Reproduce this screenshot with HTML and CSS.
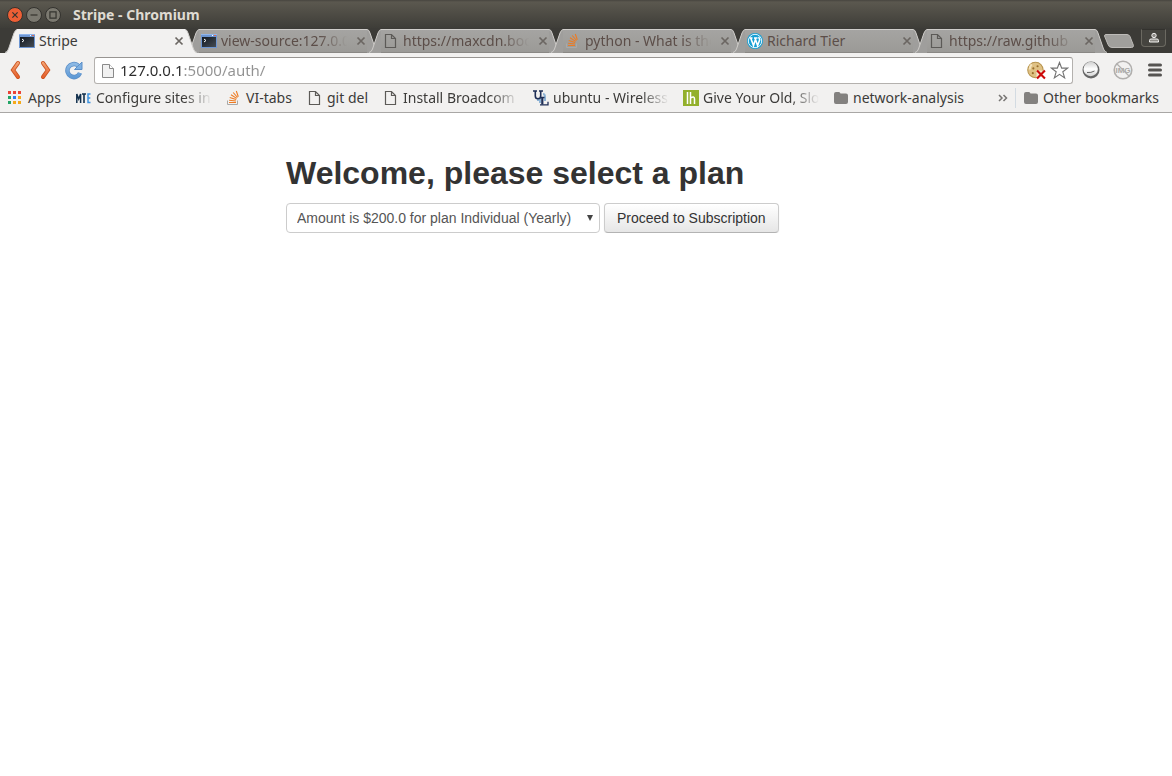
FILE: index.html
```html
<!DOCTYPE html>
<html lang="en">
<head>
<meta charset="utf-8">
<title>Stripe</title>
<link rel="stylesheet" href="styles.css">
</head>
<body>
<svg class="defs" aria-hidden="true">
  <defs>
    <linearGradient id="orange" x1="0" y1="0" x2="0" y2="1"><stop offset="0" stop-color="#f4a070"/><stop offset="1" stop-color="#e6602c"/></linearGradient>
    <linearGradient id="blue" x1="0" y1="0" x2="0" y2="1"><stop offset="0" stop-color="#8db9e4"/><stop offset="1" stop-color="#5f9ad6"/></linearGradient>
    <linearGradient id="ball" x1="0" y1="0" x2="0" y2="1"><stop offset="0" stop-color="#d0d0d0"/><stop offset=".5" stop-color="#ffffff"/><stop offset="1" stop-color="#d5d5d5"/></linearGradient>
    <linearGradient id="term" x1="0" y1="0" x2="1" y2="1"><stop offset="0" stop-color="#111820"/><stop offset="1" stop-color="#454c54"/></linearGradient>
  </defs>
  <symbol id="i-terminal" viewBox="0 0 16 16"><rect y="1" width="16" height="14" fill="#6d96d2"/><rect y="1" width="16" height="1" fill="#90b5ea"/><rect x="11" y="2" width="1" height="1" fill="#fff"/><rect x="13" y="2" width="2" height="1" fill="#e06a50"/><rect x="1" y="4" width="14" height="10" fill="url(#term)"/><path d="M3 6l2 1.500-2 1.500" fill="none" stroke="#fff"/></symbol>
  <symbol id="i-file" viewBox="0 0 16 16"><path d="M2.500 1.500h6l4 4v9h-10zM8.500 1.500v4h4" fill="none" stroke="#5c5a57" stroke-width="1.200"/></symbol>
  <symbol id="i-so" viewBox="0 0 16 16"><path d="M1.500 10.500v4h10v-4" fill="none" stroke="#aaa9a7"/><path d="M3 12.500h7M3.100 10.200l6.900.8M3.700 7.500l6.500 2M5 4.800l5.700 3.600M7.200 2.500l4.300 5M10.300 1l2 5.800" stroke="#ee7b22" stroke-width="1.100"/></symbol>
  <symbol id="i-wp" viewBox="0 0 16 16"><circle cx="8" cy="8" r="8" fill="#169fd4"/><circle cx="8" cy="8" r="6.700" fill="none" stroke="#fff" stroke-width=".9"/><path d="M2.500 5h3M7 5h3.500M3.700 5l2.800 7.500L8.300 7M8 5l2.600 7.500 2-5.500c.3-1.200-1-1.800-.6-3" fill="none" stroke="#fff" stroke-width="1.600"/></symbol>
  <symbol id="i-folder" viewBox="0 0 16 16"><path d="M1 4q0-2 2-2h3q1 0 1.500 1.500H13q2 0 2 2V12q0 2-2 2H3q-2 0-2-2z" fill="#83817f"/></symbol>
  <symbol id="i-close" viewBox="0 0 10 10"><path d="M1.500 1.500l7 7M8.500 1.500l-7 7" fill="none" stroke="currentColor" stroke-width="1.700"/></symbol>
  <symbol id="i-capl" viewBox="0 0 12 24"><path d="M0 24Q2.500 23 3.500 20L9 4Q10.500.5 12 .5V24z" fill="currentColor"/><path d="M0 23.500Q2.500 23 3.500 20L9 4Q10.500.5 12 .5" fill="none" stroke="#cfcdca"/></symbol>
  <symbol id="i-capr" viewBox="0 0 12 24"><path d="M0 .5Q2 .5 3 4L8.500 20Q9.500 23 12 24H0z" fill="currentColor"/><path d="M0 .5Q2 .5 3 4L8.500 20Q9.500 23 12 23.500" fill="none" stroke="#cfcdca"/></symbol>
</svg>

<header class="browser">
  <div class="titlebar">
    <button class="wm wm-close" aria-label="Close window"><svg viewBox="0 0 16 16"><path d="M5 5l6 6M11 5l-6 6"/></svg></button>
    <button class="wm" aria-label="Minimize"><svg viewBox="0 0 16 16"><path d="M4 8h8"/></svg></button>
    <button class="wm" aria-label="Maximize"><svg viewBox="0 0 16 16"><path d="M4.500 4.500h7v7h-7z"/></svg></button>
    <span class="window-title">Stripe - Chromium</span>
  </div>

  <div class="tabstrip">
    <div class="tabs">
      <div class="tab tab-active"><svg class="cap"><use href="#i-capl"/></svg><div class="tab-body"><svg class="icon"><use href="#i-terminal"/></svg><span class="tab-label">Stripe</span><button class="tab-close" aria-label="Close tab"><svg><use href="#i-close"/></svg></button></div><svg class="cap"><use href="#i-capr"/></svg></div>
      <div class="tab"><svg class="cap"><use href="#i-capl"/></svg><div class="tab-body"><svg class="icon"><use href="#i-terminal"/></svg><span class="tab-label fade">view-source:127.0.0.1</span><button class="tab-close" aria-label="Close tab"><svg><use href="#i-close"/></svg></button></div><svg class="cap"><use href="#i-capr"/></svg></div>
      <div class="tab"><svg class="cap"><use href="#i-capl"/></svg><div class="tab-body"><svg class="icon"><use href="#i-file"/></svg><span class="tab-label fade">https://maxcdn.bootstrap</span><button class="tab-close" aria-label="Close tab"><svg><use href="#i-close"/></svg></button></div><svg class="cap"><use href="#i-capr"/></svg></div>
      <div class="tab"><svg class="cap"><use href="#i-capl"/></svg><div class="tab-body"><svg class="icon"><use href="#i-so"/></svg><span class="tab-label fade">python - What is the</span><button class="tab-close" aria-label="Close tab"><svg><use href="#i-close"/></svg></button></div><svg class="cap"><use href="#i-capr"/></svg></div>
      <div class="tab"><svg class="cap"><use href="#i-capl"/></svg><div class="tab-body"><svg class="icon"><use href="#i-wp"/></svg><span class="tab-label">Richard Tier</span><button class="tab-close" aria-label="Close tab"><svg><use href="#i-close"/></svg></button></div><svg class="cap"><use href="#i-capr"/></svg></div>
      <div class="tab"><svg class="cap"><use href="#i-capl"/></svg><div class="tab-body"><svg class="icon"><use href="#i-file"/></svg><span class="tab-label fade">https://raw.github</span><button class="tab-close" aria-label="Close tab"><svg><use href="#i-close"/></svg></button></div><svg class="cap"><use href="#i-capr"/></svg></div>
    </div>
    <button class="new-tab" aria-label="New tab"><svg viewBox="0 0 32 16"><path d="M3 1.500h21q2 0 3 2L30.500 12.500q0 2-2 2H9q-3 0-4-3L1.500 3Q1.500 1.500 3 1.500z" fill="#a09f9c" stroke="#bdbbb8"/></svg></button>
    <button class="user" aria-label="User"><svg viewBox="0 0 12 12"><circle cx="6" cy="3.500" r="2.200"/><path d="M1.500 10V8.500q0-1.500 1.500-1.500h6q1.500 0 1.500 1.500V10z"/></svg></button>
  </div>

  <div class="toolbar">
    <button class="nav" aria-label="Back"><svg viewBox="0 0 20 20"><path d="M12 3L7 10l5 7" fill="none" stroke="#c9531f" stroke-width="4" stroke-linecap="round"/><path d="M12 3L7 10l5 7" fill="none" stroke="url(#orange)" stroke-width="2.300" stroke-linecap="round"/></svg></button>
    <button class="nav" aria-label="Forward"><svg viewBox="0 0 20 20"><path d="M8 3l5 7-5 7" fill="none" stroke="#c9531f" stroke-width="4" stroke-linecap="round"/><path d="M8 3l5 7-5 7" fill="none" stroke="url(#orange)" stroke-width="2.300" stroke-linecap="round"/></svg></button>
    <button class="nav" aria-label="Reload"><svg viewBox="0 0 20 20"><path d="M14 5.500A6.500 6.500 0 1 0 16 13" fill="none" stroke="#5c8fc8" stroke-width="4.500"/><path d="M10.500 9.500H18V2z" fill="#7db0e2" stroke="#5c8fc8"/><path d="M14 5.500A6.500 6.500 0 1 0 16 13" fill="none" stroke="url(#blue)" stroke-width="3"/></svg></button>
    <div class="omnibox">
      <svg class="icon" viewBox="0 0 16 16"><path d="M2.500 1.500h7l4 4v9h-11z" fill="#f1f1f1" stroke="#8a8a8a"/><path d="M9.500 1.500v4h4" fill="#fff" stroke="#8a8a8a"/></svg>
      <input class="url" type="text" value="127.0.0.1:5000/auth/" aria-label="Address" spellcheck="false">
      <button class="omni-btn" aria-label="Cookies blocked"><svg viewBox="0 0 18 18"><circle cx="8" cy="8.500" r="7.300" fill="#dfc184" stroke="#b8954f"/><path d="M4.500 3q-2 2-2 5" fill="none" stroke="#f5e4bd" stroke-width="2"/><circle cx="6" cy="7" r="1" fill="#986d2b"/><circle cx="10" cy="5" r="1" fill="#986d2b"/><circle cx="5.500" cy="11.500" r="1" fill="#986d2b"/><path d="M9 9h9v9H9z" fill="#fff" opacity=".6"/><path d="M9.500 9l7.500 7.500M17 9l-7.500 7.500" stroke="#cc0909" stroke-width="2"/></svg></button>
      <button class="omni-btn" aria-label="Bookmark this page"><svg viewBox="0 0 20 20"><path d="M10 1.500l2.300 6h6.200l-5 3.900 1.900 6.400L10 14.100l-5.400 3.700 1.900-6.400-5-3.900h6.200z" fill="#fff" stroke="#737373" stroke-width="1.200"/></svg></button>
    </div>
    <button class="ext" aria-label="Adblock"><svg viewBox="0 0 18 18"><circle cx="9" cy="9" r="8.500" fill="#666"/><circle cx="8.700" cy="8" r="7.200" fill="url(#ball)"/><path d="M5 11.500q4 .5 7.500-1.500" fill="none" stroke="#666"/></svg></button>
    <button class="ext ext-img" aria-label="Image blocker"><svg viewBox="0 0 20 20"><circle cx="10" cy="10" r="8.800" fill="none" stroke="#b1afad" stroke-width="1.600"/><text x="10" y="13" text-anchor="middle" class="img-text">IMG</text><path d="M4 4l12 12" stroke="#b1afad" stroke-width="1.300"/></svg></button>
    <button class="ext" aria-label="Menu"><svg viewBox="0 0 18 18"><path d="M3.500 4h11M3.500 9h11M3.500 14h11" stroke="#565452" stroke-width="3" stroke-linecap="round"/></svg></button>
  </div>

  <nav class="bookmarks">
    <a class="bm" href="#"><svg class="icon" viewBox="0 0 16 16"><path d="M0 1h3v3H0zM5 1h3v3H5zM10 1h3v3h-3z" fill="#ea4335"/><path d="M0 6h3v3H0zM0 11h3v3H0z" fill="#22a565"/><path d="M5 6h3v3H5z" fill="#2d7ff0"/><path d="M10 6h3v3h-3zM5 11h3v3H5zM10 11h3v3h-3z" fill="#f5a91a"/></svg><span class="bm-label w-xs">Apps</span></a>
    <a class="bm" href="#"><svg class="icon" viewBox="0 0 16 16"><path d="M.8 13V4l1.900 5 1.900-5v9" fill="none" stroke="#12304d" stroke-width="1.500"/><path d="M6 4h4M8 4v9" stroke="#12304d" stroke-width="1.600"/><path d="M14.500 4H12v8.500h2.500M12 8h2.300" fill="none" stroke="#3d92df" stroke-width="1.500"/></svg><span class="bm-label w-l fade">Configure sites in</span></a>
    <a class="bm" href="#"><svg class="icon"><use href="#i-so"/></svg><span class="bm-label w-m">VI-tabs</span></a>
    <a class="bm" href="#"><svg class="icon"><use href="#i-file"/></svg><span class="bm-label w-s">git del</span></a>
    <a class="bm" href="#"><svg class="icon"><use href="#i-file"/></svg><span class="bm-label w-l fade">Install Broadcom wireless</span></a>
    <a class="bm" href="#"><svg class="icon" viewBox="0 0 16 16"><path d="M4 10h4M10 4q2 0 2 3v4M6 12h2" fill="none" stroke="#8fb4d6" stroke-width="2"/><path d="M0 1h4M6 1h4" fill="none" stroke="#1f2f57" stroke-width="1.300"/><path d="M2.300 1v5q0 2.700 2.700 2.700T7.700 6V1" fill="none" stroke="#1f2f57" stroke-width="1.600"/><path d="M7 7.500h4.500M7 14.800h8v-3" fill="none" stroke="#1f2f57" stroke-width="1.300"/><path d="M9.300 7.500v7" stroke="#1f2f57" stroke-width="2.200"/></svg><span class="bm-label w-l fade">ubuntu - Wireless</span></a>
    <a class="bm" href="#"><svg class="icon" viewBox="0 0 16 16"><path d="M0 0h16v16H0z" fill="#93b02c"/><path d="M4.500 2v12M7.500 2v12M7.500 8q4-2.500 4 1v5" fill="none" stroke="#fff" stroke-width="1.500"/></svg><span class="bm-label w-l fade">Give Your Old, Slow</span></a>
    <a class="bm" href="#"><svg class="icon"><use href="#i-folder"/></svg><span class="bm-label w-l">network-analysis</span></a>
    <button class="more" aria-label="More bookmarks"><svg viewBox="0 0 10 8"><path d="M1 1l3 3-3 3M5.500 1l3 3-3 3" fill="none" stroke="#777573" stroke-width="1.500"/></svg></button>
    <a class="bm bm-other" href="#"><svg class="icon"><use href="#i-folder"/></svg><span class="bm-label w-xl">Other bookmarks</span></a>
  </nav>
</header>

<main class="page">
  <h1>Welcome, please select a plan</h1>
  <form class="plan-form">
    <div class="select-wrap">
      <select class="plan" aria-label="Plan"><option>Amount is $200.0 for plan Individual (Yearly)</option></select>
      <svg class="arrow" viewBox="0 0 6 6"><path d="M0 0h6L3 6z" fill="#444"/></svg>
    </div>
    <button class="submit" type="button">Proceed to Subscription</button>
  </form>
</main>
</body>
</html>
```
FILE: styles.css
```css
* { box-sizing: border-box; }
body {
  margin: 0;
  background: #fff;
  color: #333;
  font: 14px/20px "Liberation Sans", Arial, sans-serif;
}
button { margin: 0; padding: 0; border: 0; background: none; font: inherit; color: inherit; }
svg { display: block; }
.defs { position: absolute; width: 0; height: 0; }
.icon { width: 16px; height: 16px; flex: none; }
.fade {
  -webkit-mask-image: linear-gradient(to left, transparent, #000 28px);
  mask-image: linear-gradient(to left, transparent, #000 28px);
}

.browser {
  background: #f2f1f0;
  color: #3c3b39;
  font: 14px/20px "Noto Sans", "Open Sans", sans-serif;
  border-bottom: 1px solid #a9a7a5;
}

.titlebar {
  display: flex;
  align-items: center;
  gap: 3px;
  height: 28px;
  padding: 1px 7px 0;
  background: linear-gradient(#47453f, #5b584f 2px, #3e3d38);
}
.wm { width: 16px; height: 16px; border-radius: 50%; background: #7b7970; border: 1px solid #33322e; }
.wm svg { width: 14px; height: 14px; fill: none; stroke: #35342f; stroke-width: 1.4; }
.wm-close { background: #ee5f35; }
.window-title { margin-left: 9px; color: #dfdbd2; font-weight: 700; }

.tabstrip { display: flex; height: 25px; padding: 1px 6px 0 5px; background: #3c3b37; }
.tabs { display: flex; flex: 1; min-width: 0; padding-right: 6px; }
.tab { display: flex; flex: 1 1 0; min-width: 0; margin-right: -10px; color: #9f9e9c; }
.tab-active { position: relative; z-index: 1; color: #f2f1f0; }
.cap { width: 12px; height: 24px; flex: none; }
.tab-body {
  display: flex;
  align-items: center;
  flex: 1;
  min-width: 0;
  gap: 4px;
  padding-left: 2px;
  border-top: 1px solid #cfcdca;
  border-bottom: 1px solid #8a8885;
  background: linear-gradient(#a5a4a2, #9b9a97);
}
.tab-active .tab-body { background: #f2f1f0; border-color: #f2f1f0; }
.tab-label { flex: 1; min-width: 0; overflow: hidden; white-space: nowrap; color: #5c4e49; }
.tab-active .tab-label { color: #3c3b39; }
.tab-close { display: grid; place-items: center; width: 12px; height: 18px; margin-left: 4px; color: #6b6662; }
.tab-close svg { width: 10px; height: 10px; }
.new-tab { width: 32px; height: 16px; margin-top: 4px; }
.user {
  display: grid;
  place-items: center;
  width: 25px;
  height: 18px;
  margin-left: 6px;
  border: 1px solid #6b6961;
  border-top-color: #33322e;
  border-radius: 0 0 4px 4px;
  background: #45443f;
}
.user svg { width: 12px; height: 12px; fill: #8f8d88; stroke: #f2f1f0; }

.toolbar { display: flex; align-items: center; height: 34px; padding: 0 8px 0 6px; }
.nav { width: 20px; height: 20px; margin-right: 9px; }
.omnibox {
  display: flex;
  align-items: center;
  flex: 1;
  min-width: 0;
  gap: 4px;
  height: 27px;
  margin: 1px 0 0 1px;
  padding: 0 3px 0 5px;
  border: 1px solid #b4b1ae;
  border-top-color: #989592;
  border-radius: 3px;
  background: #fff;
}
.url {
  flex: 1;
  min-width: 0;
  padding: 0 0 2px;
  border: 0;
  outline: 0;
  font: 15px/22px "Noto Sans", "Open Sans", sans-serif;
  background: linear-gradient(to right, #2b2b2b 64px, #929292 64px);
  -webkit-background-clip: text;
  background-clip: text;
  color: transparent;
}
.omni-btn svg, .omni-btn { width: 19px; height: 19px; }
.ext { width: 18px; height: 18px; margin-left: 9px; }
.ext svg { width: 100%; height: 100%; }
.ext-img { width: 20px; height: 20px; margin-left: 13px; margin-right: 4px; }
.img-text { font: bold 8px "Liberation Sans", sans-serif; fill: #aaa8a6; }

.bookmarks { display: flex; align-items: center; gap: 14px; height: 25px; padding: 0 8px 4px; }
.bm { display: flex; align-items: center; gap: 4px; color: inherit; text-decoration: none; }
.bm-label { white-space: nowrap; }
.w-xs { width: 34px; }
.w-s { width: 42px; }
.w-m { width: 47px; }
.w-l { width: 116px; overflow: hidden; }
.w-xl { width: 121px; }
.more { margin-left: auto; }
.more svg { width: 10px; height: 8px; }
.bm-other { margin-left: -7px; padding-left: 7px; border-left: 1px solid #d3dbe2; }

.page { max-width: 600px; margin: 0 auto; padding-top: 40px; }
h1 { margin: 0 0 10px; font-size: 32px; line-height: 40px; font-weight: 700; }
.plan-form { display: flex; gap: 4px; }
.select-wrap { position: relative; }
.plan {
  appearance: none;
  width: 314px;
  height: 30px;
  padding: 4px 20px 4px 10px;
  border: 1px solid #ccc;
  border-radius: 4px;
  background: #fff;
  color: #555;
  font: inherit;
}
.arrow { position: absolute; right: 7px; top: 12px; width: 6px; height: 6px; pointer-events: none; }
.submit {
  height: 30px;
  padding: 4px 12px;
  border: 1px solid #ccc;
  border-bottom-color: #b3b3b3;
  border-radius: 4px;
  background: linear-gradient(#fff, #e6e6e6);
  box-shadow: inset 0 1px 0 #fff, 0 1px 2px rgba(0, 0, 0, .05);
}
```
